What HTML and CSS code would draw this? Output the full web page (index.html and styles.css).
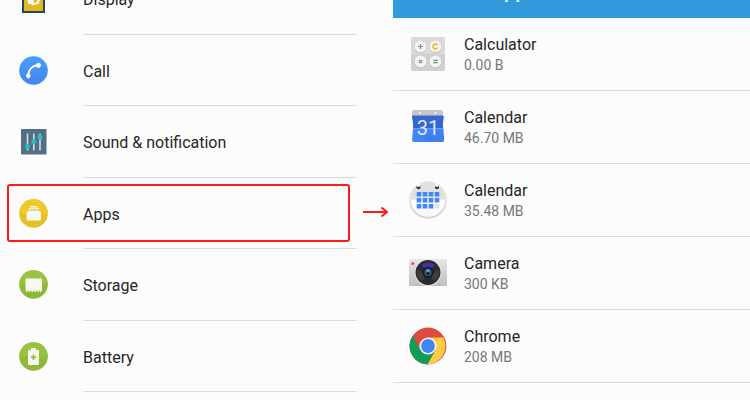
FILE: index.html
```html
<!DOCTYPE html>
<html lang="en">
<head>
  <meta charset="UTF-8">
  <meta name="viewport" content="width=device-width, initial-scale=1.0">
  <title>Settings - Apps</title>
  <link rel="stylesheet" href="styles.css">
</head>
<body>

  <main class="screens">

    <!-- Settings screen -->
    <ul class="settings-list">
      <li class="setting">
        <svg class="setting-icon" viewBox="0 0 29 29" aria-hidden="true">
          <rect x="3" y="3" width="23" height="26" fill="#1d4a66"/>
          <rect x="5" y="5" width="19" height="22" fill="#e6b91e"/>
          <path d="M14.500 8l2.500 2h3v3l1.500 2.500-1.500 2.500v2h-3l-2.500 1.500-2.500-1.500h-3v-2L8 15.500 9.500 13v-3h3z" fill="#fff"/>
          <path d="M14.500 11a4 4 0 0 1 0 8z" fill="#e6b91e"/>
        </svg>
        <a class="setting-name" href="#display">Display</a>
      </li>
      <li class="setting">
        <svg class="setting-icon" viewBox="0 0 29 29" aria-hidden="true">
          <defs>
            <linearGradient id="call-fill" x1="0" y1="0" x2="0" y2="1">
              <stop offset="0" stop-color="#46a0f8"/>
              <stop offset="1" stop-color="#4285f0"/>
            </linearGradient>
          </defs>
          <circle cx="14.500" cy="14.500" r="14.300" fill="url(#call-fill)"/>
          <path d="M9 19.500C9.500 13.500 13.500 9.500 19.500 9" fill="none" stroke="#fff" stroke-width="2"/>
          <path d="M7.500 18.600l2.900-1 .9 2.900-2 1.800c-1.400-.4-2-1.700-1.800-3.700zM17.400 8l3-.9 1.500 2-1.600 2.500-2.900-.8z" fill="#fff" stroke="#fff" stroke-width=".8" stroke-linejoin="round"/>
        </svg>
        <a class="setting-name" href="#call">Call</a>
      </li>
      <li class="setting">
        <svg class="setting-icon" viewBox="0 0 29 29" aria-hidden="true">
          <rect x="2" y="2" width="25.500" height="25.500" rx=".7" fill="#526f86"/>
          <path d="M8.500 6.500v17M14.800 6.500v17M21 6.500v17" stroke="#d5dce1" stroke-width="1.600"/>
          <g fill="#1fc2bd">
            <circle cx="8.500" cy="19.500" r="2.500"/>
            <circle cx="14.800" cy="14.800" r="2.500"/>
            <circle cx="21" cy="10" r="2.500"/>
          </g>
        </svg>
        <a class="setting-name" href="#sound">Sound &amp; notification</a>
      </li>
      <li class="setting selected">
        <svg class="setting-icon" viewBox="0 0 29 29" aria-hidden="true">
          <circle cx="14.500" cy="14.500" r="14.300" fill="#e8c020"/>
          <path d="M.2 14.500a14.300 14.300 0 0 1 28.600 0z" fill="#edca2a"/>
          <path d="M11 7h7.500v1.500H11zM9.500 9.200H20v1.600H9.500zM9 11.500h11.500v2H9zM7.500 13h14.500v7.500q0 1-1 1H8.500q-1 0-1-1z" fill="#f8f8f4"/>
          <path d="M9.500 11h10.500" stroke="#c9a51c" stroke-width=".5"/>
        </svg>
        <a class="setting-name" href="#apps">Apps</a>
        <svg class="arrow" viewBox="0 0 26 12" aria-hidden="true">
          <path d="M0 6h24M18.500 1.500l5.500 4.500-5.500 4.500" fill="none" stroke="#fb1a16" stroke-width="2"/>
        </svg>
      </li>
      <li class="setting">
        <svg class="setting-icon" viewBox="0 0 29 29" aria-hidden="true">
          <circle cx="14.500" cy="14.500" r="14.300" fill="#8db83a"/>
          <path d="M.2 14.500a14.300 14.300 0 0 1 28.600 0z" fill="#98c240"/>
          <path d="M6.500 9h16.500v11.500H6.500z" fill="#f5f8ef"/>
          <path d="M8 8v14M10.700 8v14M13.400 8v14M16.100 8v14M18.800 8v14M21.500 8v14" stroke="#f5f8ef" stroke-width="1.500"/>
        </svg>
        <a class="setting-name" href="#storage">Storage</a>
      </li>
      <li class="setting">
        <svg class="setting-icon" viewBox="0 0 29 29" aria-hidden="true">
          <circle cx="14.500" cy="14.500" r="14.300" fill="#8db83a"/>
          <path d="M.2 14.500a14.300 14.300 0 0 1 28.600 0z" fill="#98c240"/>
          <path d="M12 6h5v2h2q1 0 1 1v13q0 1-1 1h-9q-1 0-1-1V9q0-1 1-1h2z" fill="#f5f8ef"/>
          <path d="M14.500 12.500v5.500M11.800 15.300h5.400" stroke="#8cba38" stroke-width="1.600"/>
        </svg>
        <a class="setting-name" href="#battery">Battery</a>
      </li>
    </ul>

    <!-- Apps screen -->
    <section class="apps-screen">
      <header class="apps-header">
        <h1>Apps</h1>
      </header>

      <ul class="app-list">
        <li class="app">
          <svg class="app-icon" viewBox="0 0 38 38" aria-hidden="true">
            <rect x="2" y="2" width="34" height="34" rx="1.500" fill="#d0d0d0"/>
            <path d="M3.500 2h31q1.500 0 1.500 1.500V19H2V3.500Q2 2 3.500 2z" fill="#dadada"/>
            <g fill="#b5b5b5">
              <circle cx="11.500" cy="12" r="6.200"/>
              <circle cx="26.500" cy="12" r="6.200"/>
              <circle cx="11.500" cy="27" r="6.200"/>
              <circle cx="26.500" cy="27" r="6.200"/>
            </g>
            <g fill="#f3f3f3">
              <circle cx="11.500" cy="11.500" r="6"/>
              <circle cx="26.500" cy="11.500" r="6"/>
              <circle cx="11.500" cy="26.500" r="6"/>
              <circle cx="26.500" cy="26.500" r="6"/>
            </g>
            <path d="M11.500 9v5M9 11.500h5M9.800 24.800l3.400 3.400M13.200 24.800l-3.400 3.400M24.300 25.400h4.400M24.300 27.600h4.400" stroke="#888" stroke-width="1.100"/>
            <path d="M28.300 10a2.400 2.400 0 1 0 0 3" fill="none" stroke="#f2b320" stroke-width="1.500"/>
          </svg>
          <div class="app-info">
            <h2>Calculator</h2>
            <p>0.00 B</p>
          </div>
        </li>
        <li class="app">
          <svg class="app-icon" viewBox="0 0 38 38" aria-hidden="true">
            <path d="M5 2h27q2 0 2 2v6H3V4q0-2 2-2z" fill="#c6c6c6"/>
            <circle cx="11" cy="4.700" r="1" fill="#fff"/>
            <circle cx="26.500" cy="4.700" r="1" fill="#fff"/>
            <path d="M3.500 7.500h30q1.500 0 1.300 1.500l-.8 5.500v6H4v-6L3 9q-.2-1.500.5-1.500z" fill="#3566d2"/>
            <path d="M4 20.500h30.500l.5 11.500q0 2-2 2H5q-2 0-2-2z" fill="#4285f4"/>
            <path d="M12 27l7 7h14q2 0 2-2v-4l-8-7z" fill="#3f7eee"/>
            <text class="calendar-day" x="19" y="27" text-anchor="middle">31</text>
          </svg>
          <div class="app-info">
            <h2>Calendar</h2>
            <p>46.70 MB</p>
          </div>
        </li>
        <li class="app">
          <svg class="app-icon" viewBox="0 0 38 38" aria-hidden="true">
            <circle cx="19" cy="19" r="18.700" fill="#d2d2d2"/>
            <circle cx="19" cy="18" r="17.800" fill="#fafafa"/>
            <path d="M1.200 18.500a17.800 17.800 0 0 1 35.600 0z" fill="#e0e0e0"/>
            <path d="M9.500 2.500v3M28 2.500v3" stroke="#fff" stroke-width="3"/>
            <path d="M7.500 5q2 2 4 0v2q-2 2.500-4 0zM26 5q2 2 4 0v2q-2 2.500-4 0z" fill="#333"/>
            <path d="M10 11v4.400M16 11v4.400M22 11v4.400M28 11v4.400M10 17v4.400M16 17v4.400M22 17v4.400M28 17v4.400M10 23v4.400M16 23v4.400M22 23v4.400" stroke="#4285f4" stroke-width="4.600"/>
            <path d="M28 23v4.400" stroke="#e2e2e2" stroke-width="4.600"/>
          </svg>
          <div class="app-info">
            <h2>Calendar</h2>
            <p>35.48 MB</p>
          </div>
        </li>
        <li class="app">
          <svg class="app-icon" viewBox="0 0 38 38" aria-hidden="true">
            <defs>
              <linearGradient id="camera-body" x1="0" y1="0" x2="0" y2="1">
                <stop offset="0" stop-color="#e6e6e6"/>
                <stop offset="1" stop-color="#bebebe"/>
              </linearGradient>
            </defs>
            <rect x="0" y="5" width="38" height="27" rx="1" fill="url(#camera-body)"/>
            <circle cx="3.800" cy="9.500" r="1.500" fill="#e2503c"/>
            <circle cx="19" cy="18.500" r="13.400" fill="#e9e9e9"/>
            <circle cx="19" cy="18.500" r="12.500" fill="#2b2b2d"/>
            <path d="M19 18.500L12.500 11q6.500-4.500 13.500 0z" fill="#46319c"/>
            <path d="M8 15q-2 9 5 12l4-6zM30 15q2 9-5 12l-4-6z" fill="#3d3d40"/>
            <circle cx="19" cy="18.500" r="5.600" fill="#151a22"/>
            <circle cx="19" cy="18.500" r="3.800" fill="#33536b"/>
            <circle cx="19" cy="17" r="1.900" fill="#4ba3dc"/>
            <circle cx="19" cy="19.500" r="1.400" fill="#101820"/>
          </svg>
          <div class="app-info">
            <h2>Camera</h2>
            <p>300 KB</p>
          </div>
        </li>
        <li class="app">
          <svg class="app-icon" viewBox="0 0 38 38" aria-hidden="true">
            <circle cx="19" cy="19" r="18.400" fill="#dd4b3e"/>
            <path d="M19 10.500h15.300A18.400 18.400 0 0 1 18.300 37.400L26.400 23.300z" fill="#ffcd40"/>
            <path d="M3.800 8.700A18.400 18.400 0 0 0 18.300 37.400L26.400 23.300 11.600 23.200z" fill="#109d58"/>
            <circle cx="19" cy="19" r="8.600" fill="#f5f5f5"/>
            <circle cx="19" cy="19" r="6.900" fill="#4285f4"/>
          </svg>
          <div class="app-info">
            <h2>Chrome</h2>
            <p>208 MB</p>
          </div>
        </li>
      </ul>
    </section>

  </main>

</body>
</html>
```
FILE: styles.css
```css
/* Basic Reset */
* {
  margin: 0;
  padding: 0;
  box-sizing: border-box;
}

body {
  font-family: Roboto, Arial, sans-serif;
  background-color: #fcfcfc;
  color: #262626;
  overflow: hidden;
}

ul {
  list-style: none;
}

/* Two phone screens side by side, both scrolled down a little */
.screens {
  display: grid;
  grid-template-columns: 1fr 1fr;
  column-gap: 36px;
  align-items: start;
  margin-top: -37px;
}

/* Settings list */
.settings-list {
  display: grid;
  grid-auto-rows: 1fr;
  height: 429px;
}

.setting {
  position: relative;
  display: flex;
  align-items: center;
  gap: 35px;
  padding-left: 19px;
}

.setting-icon {
  flex: none;
  width: 29px;
  height: 29px;
}

.setting-name {
  flex: 1;
  display: flex;
  align-items: center;
  height: 100%;
  padding-top: 3px;
  border-bottom: 1px solid #dcdcdc;
  color: inherit;
  font-size: 16px;
  text-decoration: none;
}

/* Red frame and arrow around the chosen setting */
.selected::after {
  content: "";
  position: absolute;
  inset: 6px 7px 7px 7px;
  border: 2px solid #fb1a16;
  border-radius: 3px;
}

.arrow {
  position: absolute;
  top: 28px;
  left: calc(100% + 6px);
  width: 26px;
  height: 12px;
}

/* Apps screen */
.apps-header {
  display: flex;
  align-items: center;
  height: 55px;
  padding-left: 98px;
  background-color: #3199dc;
  color: #fff;
}

.apps-header h1 {
  font-size: 20px;
  font-weight: 500;
}

.app {
  display: flex;
  align-items: center;
  gap: 17px;
  height: 73px;
  padding-left: 16px;
  border-bottom: 1px solid #dcdcdc;
}

.app-icon {
  flex: none;
  width: 38px;
  height: 38px;
}

.app-info {
  padding-top: 2px;
}

.app-info h2 {
  font-size: 16px;
  font-weight: 400;
  line-height: 20px;
}

.app-info p {
  color: #777;
  font-size: 14px;
  line-height: 20px;
}

.calendar-day {
  fill: #dfe7f8;
  font-size: 20px;
}
```
